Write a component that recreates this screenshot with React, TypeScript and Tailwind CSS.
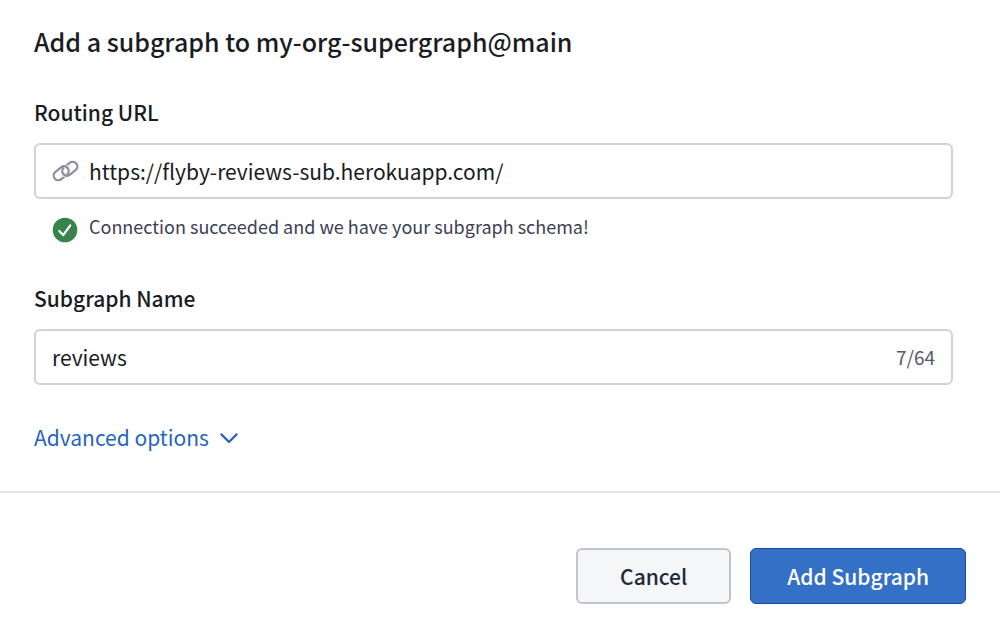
import { useState } from "react";

const NAME_LIMIT = 64;

function LinkIcon() {
  const left = { x: 0.9, y: 10.5, width: 16.6, height: 9.4, rx: 4.7, transform: "rotate(-39 9.2 15.2)" };
  const right = { x: 9.5, y: 6.1, width: 16.6, height: 9.4, rx: 4.7, transform: "rotate(-39 17.8 10.8)" };
  return (
    <svg
      className="h-[26px] w-[26px] shrink-0 overflow-visible text-[#8c919f]"
      viewBox="0 0 26 26"
      fill="none"
      stroke="currentColor"
      strokeWidth="2.3"
      aria-hidden="true"
    >
      {/* The links weave: left passes over at the upper crossing, right at the lower one. */}
      <rect {...right} />
      <rect {...left} stroke="#fff" strokeWidth="3.6" strokeDasharray="4 100" strokeDashoffset="-10" />
      <rect {...left} />
      <rect {...right} stroke="#fff" strokeWidth="3.6" strokeDasharray="4 100" strokeDashoffset="-32.4" />
      <rect {...right} strokeDasharray="6 100" strokeDashoffset="-31.4" />
    </svg>
  );
}

function SuccessIcon() {
  return (
    <svg className="mt-[5px] h-[26px] w-[26px] shrink-0" viewBox="0 0 26 26" fill="none" aria-hidden="true">
      <circle cx="13" cy="13" r="12.3" fill="#36834b" />
      <path d="M7.2 14l4 4.1 7-9.6" stroke="#fff" strokeWidth="2.2" strokeLinecap="round" strokeLinejoin="round" />
    </svg>
  );
}

function ChevronIcon() {
  return (
    <svg
      className="h-5 w-5"
      viewBox="0 0 20 20"
      fill="none"
      stroke="currentColor"
      strokeWidth="2.2"
      strokeLinecap="round"
      strokeLinejoin="round"
      aria-hidden="true"
    >
      <path d="M2.4 7.4l7.6 7.6 7.6-7.6" />
    </svg>
  );
}

export default function App() {
  const [url, setUrl] = useState("https://flyby-reviews-sub.herokuapp.com/");
  const [name, setName] = useState("reviews");

  return (
    <form
      className="bg-white font-['Noto_Sans_CJK_SC','Noto_Sans',sans-serif] text-[21px] leading-7 text-[#191c23]"
      onSubmit={(event) => event.preventDefault()}
    >
      <div className="border-b-2 border-[#e2e3e8] pt-[25px] pr-[47px] pb-10 pl-[34px]">
        <h1 className="text-[25px] leading-8 font-medium">Add a subgraph to my-org-supergraph@main</h1>

        <label htmlFor="routing-url" className="mt-[41px] block font-medium">
          Routing URL
        </label>
        <div className="mt-[17px] flex h-14 items-center gap-[11px] rounded-md border-2 border-[#d0d2d8] px-4">
          <LinkIcon />
          <input
            id="routing-url"
            type="text"
            value={url}
            onChange={(event) => setUrl(event.target.value)}
            className="min-w-0 flex-1 bg-transparent outline-none"
          />
        </div>
        <p className="mt-[13px] flex items-start gap-[11px] pl-[18px] text-[18px] text-[#3b4152]">
          <SuccessIcon />
          Connection succeeded and we have your subgraph schema!
        </p>

        <label htmlFor="subgraph-name" className="mt-[41px] block font-medium">
          Subgraph Name
        </label>
        <div className="mt-[17px] flex h-14 items-center gap-3 rounded-md border-2 border-[#d0d2d8] px-4">
          <input
            id="subgraph-name"
            type="text"
            maxLength={NAME_LIMIT}
            value={name}
            onChange={(event) => setName(event.target.value)}
            className="min-w-0 flex-1 bg-transparent outline-none"
          />
          <span className="text-[19px] text-[#535968]">{`${name.length}/${NAME_LIMIT}`}</span>
        </div>

        <button type="button" className="mt-[38px] flex items-center gap-[10px] text-[#2565bd]">
          Advanced options
          <ChevronIcon />
        </button>
      </div>

      <div className="flex justify-end gap-[19px] pt-[55px] pr-[34px] pb-8">
        <button
          type="button"
          className="h-14 rounded-md border-2 border-[#c3c5ca] bg-[#f4f6f8] px-[42px] font-medium text-[#23293a]"
        >
          Cancel
        </button>
        <button
          type="submit"
          className="h-14 rounded-md border border-[#1a4a9c] bg-[#3570c7] px-9 font-medium text-white"
        >
          Add Subgraph
        </button>
      </div>
    </form>
  );
}
